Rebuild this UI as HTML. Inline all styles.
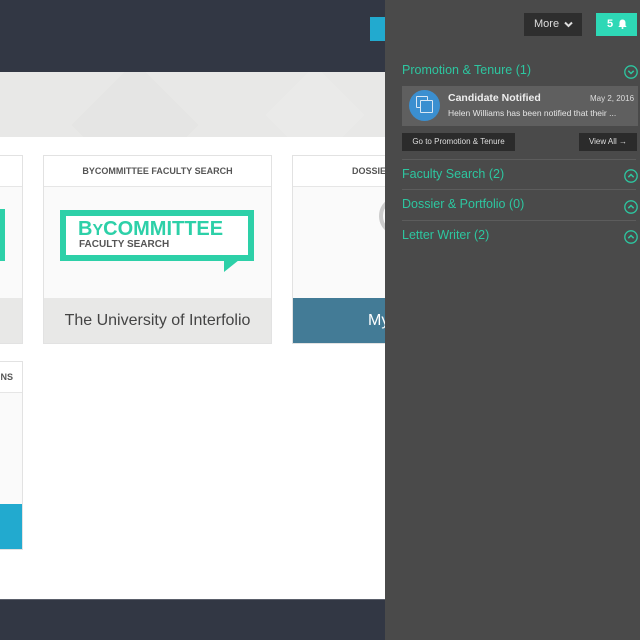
<!DOCTYPE html>
<html><head><style>
*{margin:0;padding:0;box-sizing:border-box}
body{width:640px;height:640px;overflow:hidden;position:relative;font-family:"Liberation Sans",sans-serif;background:#fff}
.abs{position:absolute}
.card{position:absolute;border:1px solid #e2e2e2;background:#fafafa}
.ch{position:absolute;left:0;right:0;top:0;height:31px;background:#fff;border-bottom:1px solid #e6e6e6;font-size:9px;font-weight:bold;color:#555;text-align:center;line-height:31px;white-space:nowrap;overflow:hidden}
.sec{position:absolute;left:402px;right:4px;font-size:12.5px;color:#2dc6a0}
.chev{position:absolute;right:-2px;top:1px}
.sep{position:absolute;left:402px;right:4px;height:1px;background:#5c5c5c}
</style></head><body>
<div class="abs" style="left:0;top:0;width:385px;height:72px;background:#323744"></div>
<div class="abs" style="left:370px;top:17px;width:15px;height:24px;background:#22aacf"></div>
<div class="abs" style="left:0;top:72px;width:385px;height:65px;background:#e8e8e7;overflow:hidden">
<div class="abs" style="left:90px;top:8px;width:90px;height:90px;background:#e5e5e4;transform:rotate(45deg)"></div>
<div class="abs" style="left:280px;top:8px;width:70px;height:70px;background:#eaeae9;transform:rotate(45deg)"></div>
</div>
<div class="abs" style="left:0;top:599px;width:385px;height:41px;background:#323744;border-top:1px solid #5a5f6a"></div>

<div class="card" style="left:-5px;top:155px;width:28px;height:189px">
<div class="ch"></div>
<div class="abs" style="left:0;top:53px;width:9px;height:52px;background:#2dd0a8"></div>
<div class="abs" style="left:0;right:0;bottom:0;height:45px;background:#e8e8e7"></div>
</div>
<div class="card" style="left:43px;top:155px;width:229px;height:189px">
<div class="ch">BYCOMMITTEE FACULTY SEARCH</div>
<div class="abs" style="left:16px;top:54px;width:194px;height:51px;border:6px solid #2dd0a8;background:#fff"></div>
<div class="abs" style="left:180px;top:104px;width:0;height:0;border-left:15px solid #2dd0a8;border-bottom:12px solid transparent"></div>
<div class="abs" style="left:34px;top:62px;font-size:20px;font-weight:bold;color:#2dd0a8">B<span style="font-size:16px">Y</span>COMMITTEE</div>
<div class="abs" style="left:35px;top:83px;font-size:10px;font-weight:bold;color:#555">FACULTY SEARCH</div>
<div class="abs" style="left:0;right:0;bottom:0;height:45px;background:#e8e8e7;font-size:16px;color:#444;text-align:center;line-height:45px">The University of Interfolio</div>
</div>
<div class="card" style="left:292px;top:155px;width:100px;height:189px">
<div class="ch" style="text-align:left;padding-left:59px">DOSSIER</div>
<div class="abs" style="left:86px;top:40px;width:40px;height:40px;border-radius:50%;border:4px solid #ccc"></div>
<div class="abs" style="left:0;right:0;bottom:0;height:45px;background:#437b96;color:#fff;font-size:16px;line-height:45px;padding-left:75px">My</div>
</div>
<div class="card" style="left:-5px;top:361px;width:28px;height:189px">
<div class="ch" style="text-align:right;padding-right:9px">NS</div>
<div class="abs" style="left:0;right:0;bottom:0;height:45px;background:#22aacf"></div>
</div>

<div class="abs" style="left:385px;top:0;width:255px;height:640px;background:#4a4a4a"></div>
<div class="abs" style="left:524px;top:13px;width:58px;height:23px;background:#2e2e2e;color:#ddd;font-size:11px;line-height:23px;padding-left:10px">More
<svg class="abs" style="left:40px;top:8px" width="9" height="7" viewBox="0 0 9 7"><path d="M1 1.5L4.5 5L8 1.5" stroke="#ddd" stroke-width="2" fill="none"/></svg></div>
<div class="abs" style="left:596px;top:13px;width:41px;height:23px;background:#2ed8b6;color:#fff;font-size:11px;font-weight:bold;line-height:23px;padding-left:11px">5
<svg class="abs" style="left:22px;top:6px" width="9" height="10" viewBox="0 0 9 10"><path d="M4.5 0.5C2.5 0.5 1.5 2 1.5 4V6.5L0.3 8H8.7L7.5 6.5V4C7.5 2 6.5 0.5 4.5 0.5Z" fill="#fff"/><circle cx="4.5" cy="9" r="1" fill="#fff"/></svg></div>

<div class="sec" style="top:63px">Promotion &amp; Tenure (1)<svg class="chev" style="top:2px" width="14" height="14" viewBox="0 0 14 14"><circle cx="7" cy="7" r="6.2" stroke="#2dc6a0" stroke-width="1.3" fill="none"/><path d="M4.3 5.8L7 8.5L9.7 5.8" stroke="#2dc6a0" stroke-width="1.5" fill="none"/></svg></div>
<div class="abs" style="left:402px;top:86px;width:236px;height:40px;background:#5f5f5f"></div>
<div class="abs" style="left:409px;top:90px;width:31px;height:31px;border-radius:50%;background:#3b8fd0"></div>
<div class="abs" style="left:416px;top:96px;width:12px;height:12px;border:1.5px solid #dbe8f5;border-radius:1px"></div>
<div class="abs" style="left:420px;top:100px;width:13px;height:13px;border:1.5px solid #dbe8f5;background:#3b8fd0;border-radius:1px"></div>
<div class="abs" style="left:448px;top:92px;font-size:10.5px;font-weight:bold;color:#eee">Candidate Notified</div>
<div class="abs" style="left:590px;top:94px;font-size:8px;color:#ddd">May 2, 2016</div>
<div class="abs" style="left:448px;top:108px;font-size:8.5px;color:#e6e6e6">Helen Williams has been notified that their ...</div>
<div class="abs" style="left:402px;top:133px;width:113px;height:18px;background:#2b2b2b;color:#ddd;font-size:8px;line-height:18px;text-align:center">Go to Promotion &amp; Tenure</div>
<div class="abs" style="left:579px;top:133px;width:58px;height:18px;background:#2b2b2b;color:#ddd;font-size:8px;line-height:18px;text-align:center">View All &#x2192;</div>
<div class="sep" style="top:159px"></div>
<div class="sec" style="top:167px">Faculty Search (2)<svg class="chev" style="top:2px" width="14" height="14" viewBox="0 0 14 14"><circle cx="7" cy="7" r="6.2" stroke="#2dc6a0" stroke-width="1.3" fill="none"/><path d="M4.3 8.2L7 5.5L9.7 8.2" stroke="#2dc6a0" stroke-width="1.5" fill="none"/></svg></div>
<div class="sep" style="top:189px"></div>
<div class="sec" style="top:197px">Dossier &amp; Portfolio (0)<svg class="chev" style="top:3px" width="14" height="14" viewBox="0 0 14 14"><circle cx="7" cy="7" r="6.2" stroke="#2dc6a0" stroke-width="1.3" fill="none"/><path d="M4.3 8.2L7 5.5L9.7 8.2" stroke="#2dc6a0" stroke-width="1.5" fill="none"/></svg></div>
<div class="sep" style="top:220px"></div>
<div class="sec" style="top:228px">Letter Writer (2)<svg class="chev" style="top:2px" width="14" height="14" viewBox="0 0 14 14"><circle cx="7" cy="7" r="6.2" stroke="#2dc6a0" stroke-width="1.3" fill="none"/><path d="M4.3 8.2L7 5.5L9.7 8.2" stroke="#2dc6a0" stroke-width="1.5" fill="none"/></svg></div>
</body></html>
